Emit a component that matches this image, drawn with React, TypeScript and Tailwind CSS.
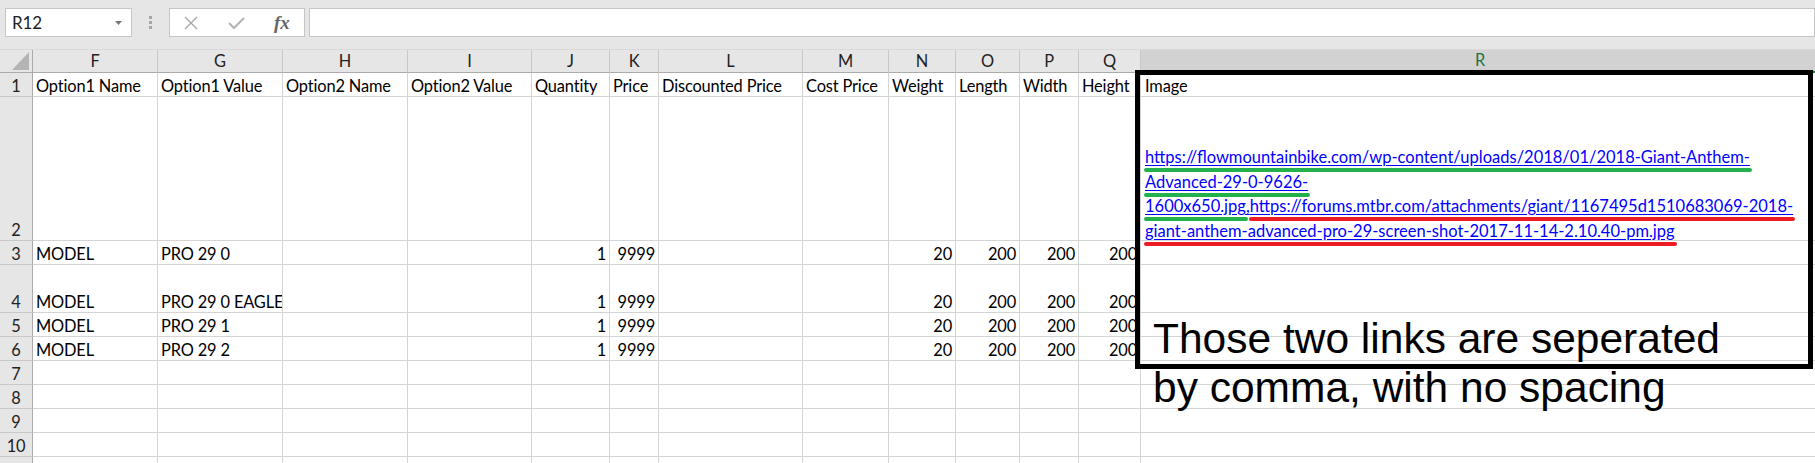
import React from 'react';

const cols = [
  { k: 'F', w: 'w-[125px]' },
  { k: 'G', w: 'w-[125px]' },
  { k: 'H', w: 'w-[125px]' },
  { k: 'I', w: 'w-[124px]' },
  { k: 'J', w: 'w-[78px]' },
  { k: 'K', w: 'w-[49px]' },
  { k: 'L', w: 'w-[144px]' },
  { k: 'M', w: 'w-[86px]' },
  { k: 'N', w: 'w-[67px]' },
  { k: 'O', w: 'w-[64px]' },
  { k: 'P', w: 'w-[59px]' },
  { k: 'Q', w: 'w-[62px]' },
];

const header = [
  'Option1 Name', 'Option1 Value', 'Option2 Name', 'Option2 Value', 'Quantity', 'Price',
  'Discounted Price', 'Cost Price', 'Weight', 'Length', 'Width', 'Height',
];

const product = (v: string) => ['MODEL', v, '', '', '1', '9999', '', '', '20', '200', '200', '200'];

function Mark({ color, children }: { color: string; children: React.ReactNode }) {
  return (
    <span className="relative">
      {children}
      <span className={`absolute -left-px -right-[2px] -bottom-[5px] h-[4px] rounded-full ${color}`} />
    </span>
  );
}

function Links() {
  return (
    <div className="flex flex-col justify-end h-full -mb-[3px] text-[#0000ff] text-[16.5px] leading-[24.5px] tracking-normal">
      <div className="underline underline-offset-[2px]">
        <Mark color="bg-[#22b14c]">https://flowmountainbike.com/wp-content/uploads/2018/01/2018-Giant-Anthem-</Mark>
      </div>
      <div className="underline underline-offset-[2px]">
        <Mark color="bg-[#22b14c]">Advanced-29-0-9626-</Mark>
      </div>
      <div className="underline underline-offset-[2px]">
        <Mark color="bg-[#22b14c]">1600x650.jpg</Mark>,
        <Mark color="bg-[#ed1c24]">https://forums.mtbr.com/attachments/giant/1167495d1510683069-2018-</Mark>
      </div>
      <div className="underline underline-offset-[2px]">
        <Mark color="bg-[#ed1c24]">giant-anthem-advanced-pro-29-screen-shot-2017-11-14-2.10.40-pm.jpg</Mark>
      </div>
    </div>
  );
}

type Row = { n: number; label: string; h: string; cells: string[]; r?: React.ReactNode };

const rows: Row[] = [
  { n: 1, label: '1', h: 'h-[24px]', cells: header, r: 'Image' },
  { n: 2, label: '2', h: 'h-[144px]', cells: [], r: <Links /> },
  { n: 3, label: '3', h: 'h-[24px]', cells: product('PRO 29 0') },
  { n: 4, label: '4', h: 'h-[48px]', cells: product('PRO 29 0 EAGLE') },
  { n: 5, label: '5', h: 'h-[24px]', cells: product('PRO 29 1') },
  { n: 6, label: '6', h: 'h-[24px]', cells: product('PRO 29 2') },
  { n: 7, label: '7', h: 'h-[24px]', cells: [] },
  { n: 8, label: '8', h: 'h-[24px]', cells: [] },
  { n: 9, label: '9', h: 'h-[24px]', cells: [] },
  { n: 10, label: '10', h: 'h-[24px]', cells: [] },
  { n: 11, label: '', h: 'h-[24px]', cells: [] },
];

function FormulaBar() {
  return (
    <div className="h-[50px] bg-[#e6e6e6] flex items-start pt-[8px] border-b border-[#d9d9d9]">
      <div className="ml-[5px] w-[127px] h-[29px] bg-white border border-[#c6c6c6] flex items-center justify-between pl-[6px] pr-[9px] text-[17px] text-[#222]">
        <span>R12</span>
        <svg width="7" height="4" viewBox="0 0 7 4">
          <path d="M0 0 L7 0 L3.5 4 Z" fill="#777" />
        </svg>
      </div>
      <div className="w-[37px] h-[29px] flex flex-col items-center justify-center gap-[2px]">
        <span className="w-[3px] h-[3px] bg-[#a6a6a6]" />
        <span className="w-[3px] h-[3px] bg-[#a6a6a6]" />
        <span className="w-[3px] h-[3px] bg-[#a6a6a6]" />
      </div>
      <div className="w-[136px] h-[29px] bg-white border border-[#c6c6c6] flex items-center pl-[13px] gap-[29px]">
        <svg width="16" height="16" viewBox="0 0 16 16">
          <path d="M2 2 L14 14 M14 2 L2 14" stroke="#a6a6a6" strokeWidth="1.4" fill="none" />
        </svg>
        <svg width="17" height="16" viewBox="0 0 17 16">
          <path d="M1 8 L6 13 L16 3" stroke="#b4b4b4" strokeWidth="2" fill="none" />
        </svg>
        <span className="font-['Liberation_Serif',serif] italic text-[19px] text-[#666] font-bold leading-none">fx</span>
      </div>
      <div className="ml-[4px] flex-1 h-[29px] bg-white border border-[#c6c6c6]" />
    </div>
  );
}

export default function App() {
  return (
    <div className="w-[1815px] h-[463px] overflow-hidden bg-white relative font-['Lato',sans-serif] text-[16.4px] tracking-[-0.15px] text-black">
      <FormulaBar />
      <div className="flex h-[23px]">
        <div className="w-[33px] shrink-0 bg-[#e6e6e6] border-r border-b border-[#ababab] relative">
          <svg className="absolute left-[12px] top-[2px]" width="18" height="18" viewBox="0 0 18 18">
            <path d="M0 18 L17 18 L17 0 Z" fill="#b4b4b4" />
          </svg>
        </div>
        {cols.map((c) => (
          <div
            key={c.k}
            className={`${c.w} shrink-0 bg-[#e6e6e6] border-r border-r-[#c8c8c8] border-b border-b-[#ababab] flex items-center justify-center text-[#222]`}
          >
            {c.k}
          </div>
        ))}
        <div className="w-[678px] shrink-0 bg-[#d2d2d2] border-b-2 border-[#217346] flex items-center justify-center text-[#217346]">
          R
        </div>
      </div>
      {rows.map((row) => (
        <div key={row.n} className={`flex ${row.h}`}>
          <div className="w-[33px] shrink-0 bg-[#e6e6e6] border-r border-r-[#ababab] border-b border-b-[#c8c8c8] flex items-end justify-center leading-[20px] text-[#222]">
            {row.label}
          </div>
          {cols.map((c, i) => {
            const v = row.cells[i] ?? '';
            const num = /^\d+$/.test(v) && row.n > 1;
            return (
              <div
                key={c.k}
                className={`${c.w} shrink-0 border-r border-b border-[#d4d4d4] flex items-end leading-[20px] whitespace-nowrap overflow-hidden ${num ? 'justify-end pr-[3px]' : 'pl-[3px]'}`}
              >
                {v}
              </div>
            );
          })}
          <div className="w-[678px] shrink-0 border-b border-[#d4d4d4] flex items-end leading-[20px] whitespace-nowrap pl-[4px]">
            {row.r}
          </div>
        </div>
      ))}

      <div className="absolute left-[1135px] top-[70px] w-[678px] h-[299px] border-[5px] border-black" />
      <div className="absolute left-[1153px] top-[314px] whitespace-nowrap font-['Liberation_Sans',Arial,sans-serif] text-[42.5px] leading-[49px] tracking-normal text-black">
        <div>Those two links are seperated</div>
        <div>by comma, with no spacing</div>
      </div>
    </div>
  );
}
